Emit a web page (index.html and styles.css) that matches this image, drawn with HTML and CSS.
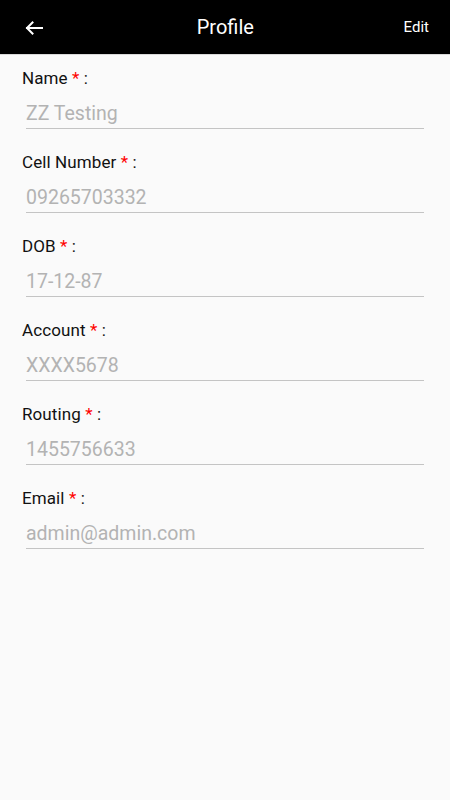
FILE: index.html
```html
<!DOCTYPE html>
<html lang="en">
<head>
<meta charset="utf-8">
<title>Profile</title>
<link rel="stylesheet" href="styles.css">
</head>
<body>
<header class="appbar">
  <button class="back" aria-label="Back">
    <svg width="18" height="14" viewBox="0 0 18 14" aria-hidden="true">
      <path d="M17 7H2M7.5 1.5L2 7l5.5 5.5" fill="none" stroke="#fff" stroke-width="2" stroke-linecap="square" stroke-linejoin="miter"/>
    </svg>
  </button>
  <h1 class="title">Profile</h1>
  <span class="edit">Edit</span>
</header>
<main class="form">
  <div class="field">
    <div class="label">Name <span class="req">*</span> :</div>
    <div class="value">ZZ Testing</div>
  </div>
  <div class="field">
    <div class="label">Cell Number <span class="req">*</span> :</div>
    <div class="value">09265703332</div>
  </div>
  <div class="field">
    <div class="label">DOB <span class="req">*</span> :</div>
    <div class="value">17-12-87</div>
  </div>
  <div class="field">
    <div class="label">Account <span class="req">*</span> :</div>
    <div class="value">XXXX5678</div>
  </div>
  <div class="field">
    <div class="label">Routing <span class="req">*</span> :</div>
    <div class="value">1455756633</div>
  </div>
  <div class="field">
    <div class="label">Email <span class="req">*</span> :</div>
    <div class="value">admin@admin.com</div>
  </div>
</main>
</body>
</html>
```

FILE: styles.css
```css
* { box-sizing: border-box; }
html, body {
  margin: 0;
  padding: 0;
  background: #fafafa;
  font-family: Roboto, "Noto Sans", "Liberation Sans", sans-serif;
}
body { min-height: 800px; }

.appbar {
  height: 55px;
  background: #000;
  border-bottom: 1px solid #d9d9d9;
  display: flex;
  align-items: center;
  padding: 0 21px 0 25px;
}
.back {
  background: none;
  border: 0;
  padding: 0;
  margin: 2px 0 0 0;
  width: 18px;
  height: 14px;
  display: flex;
}
.title {
  flex: 1;
  margin: 0;
  text-align: center;
  color: #fff;
  font-size: 20px;
  font-weight: 400;
  line-height: 24px;
  padding-left: 4px;
}
.edit {
  color: #fff;
  font-size: 15px;
  line-height: 20px;
}

.form {
  display: flex;
  flex-direction: column;
  gap: 23px;
  padding: 13px 26px 0 0;
}
.field {
  display: flex;
  flex-direction: column;
}
.label {
  padding-left: 22px;
  font-size: 17px;
  letter-spacing: 0.1px;
  line-height: 20px;
  color: #111;
}
.req { color: #f00; }
.value {
  margin: 14px 0 0 26px;
  padding-bottom: 2px;
  font-size: 19.5px;
  line-height: 24px;
  color: #b3b3b3;
  border-bottom: 1.5px solid #c4c4c4;
}
```
